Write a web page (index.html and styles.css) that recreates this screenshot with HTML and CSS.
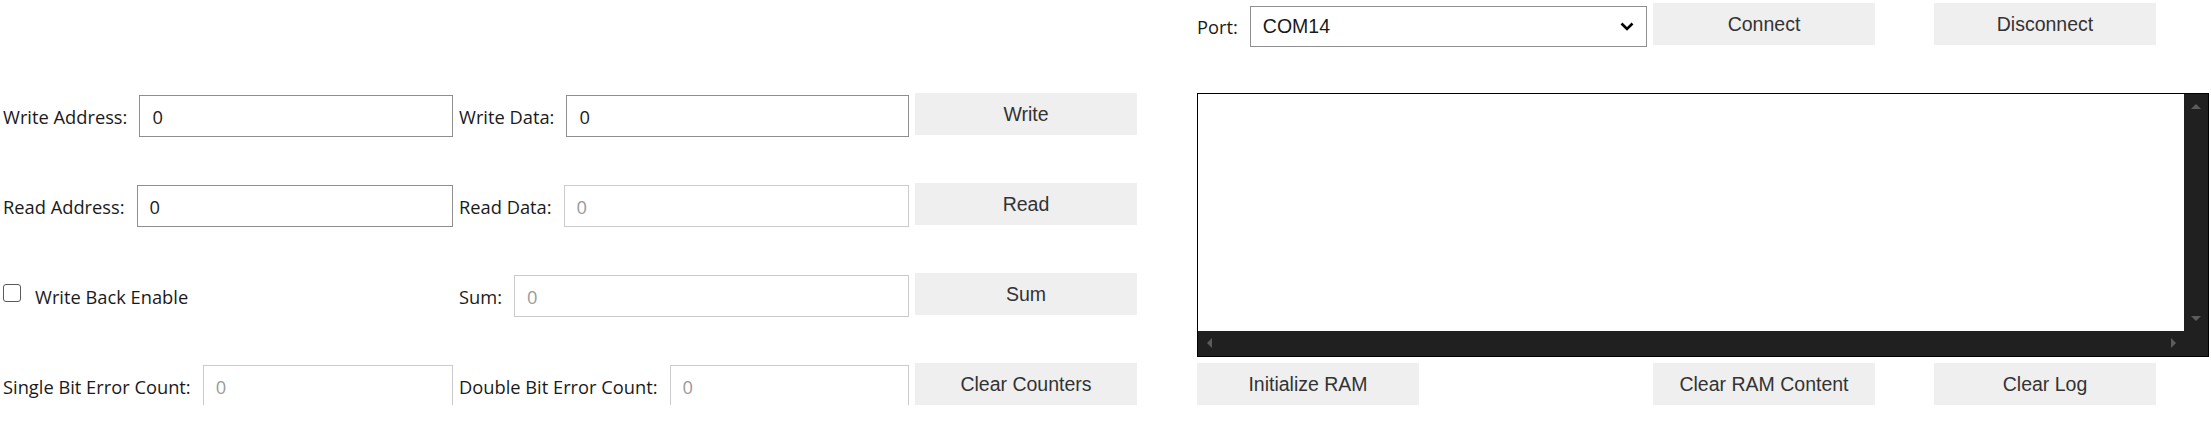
FILE: index.html
```html
<!DOCTYPE html>
<html lang="en">
<head>
<meta charset="utf-8">
<title>RAM ECC Control</title>
<link rel="stylesheet" href="styles.css">
</head>
<body>
<div class="app">
  <div class="topbar">
    <div class="cell port-cell">
      <label class="lbl" for="port">Port:</label>
      <div class="select-wrap">
        <select id="port" class="select"><option>COM14</option></select>
        <svg class="chev" width="14" height="9" viewBox="0 0 14 9"><path d="M1.5 1.5 L7 7 L12.5 1.5" fill="none" stroke="#000" stroke-width="2.6"/></svg>
      </div>
    </div>
    <button class="btn gap-s">Connect</button>
    <button class="btn gap-l">Disconnect</button>
  </div>

  <div class="left">
    <div class="row">
      <div class="cell"><label class="lbl">Write Address:</label><input class="inp" value="0"></div>
      <div class="cell"><label class="lbl">Write Data:</label><input class="inp" value="0"></div>
      <button class="btn">Write</button>
    </div>
    <div class="row">
      <div class="cell"><label class="lbl">Read Address:</label><input class="inp" value="0"></div>
      <div class="cell"><label class="lbl">Read Data:</label><input class="inp ro" value="0" disabled></div>
      <button class="btn">Read</button>
    </div>
    <div class="row">
      <div class="cell"><label class="chk-label"><input type="checkbox" class="chk"><span>Write Back Enable</span></label></div>
      <div class="cell"><label class="lbl">Sum:</label><input class="inp ro" value="0" disabled></div>
      <button class="btn">Sum</button>
    </div>
    <div class="row">
      <div class="cell"><label class="lbl">Single Bit Error Count:</label><input class="inp ro" value="0" disabled></div>
      <div class="cell"><label class="lbl">Double Bit Error Count:</label><input class="inp ro" value="0" disabled></div>
      <button class="btn">Clear Counters</button>
    </div>
  </div>

  <div class="right">
    <div class="log">
      <div class="log-text"></div>
      <div class="vbar"><span class="arr up"></span><span class="arr down"></span></div>
      <div class="hbar"><span class="arr left-a"></span><span class="arr right-a"></span></div>
      <div class="corner"></div>
    </div>
    <div class="bottombar">
      <div class="cell-w"><button class="btn">Initialize RAM</button></div>
      <button class="btn gap-s">Clear RAM Content</button>
      <button class="btn gap-l">Clear Log</button>
    </div>
  </div>
</div>
</body>
</html>
```
FILE: styles.css
```css
html, body {
  margin: 0;
  padding: 0;
  background: #ffffff;
}

.app {
  display: grid;
  grid-template-columns: 1134px 1012px;
  grid-template-rows: 93px auto;
  column-gap: 60px;
  padding-left: 3px;
  font-family: "Open Sans", "Noto Sans", sans-serif;
  color: #1a1a1a;
}

.topbar {
  grid-column: 2;
  grid-row: 1;
  display: flex;
  align-items: flex-start;
  padding-top: 3px;
}

.left {
  grid-column: 1;
  grid-row: 2;
  display: flex;
  flex-direction: column;
  gap: 48px;
}

.right {
  grid-column: 2;
  grid-row: 2;
  display: flex;
  flex-direction: column;
  gap: 6px;
}

.row {
  display: flex;
  align-items: flex-start;
  gap: 6px;
  height: 42px;
}

.cell {
  width: 450px;
  height: 42px;
  margin-top: 2px;
  display: flex;
  align-items: center;
  gap: 12px;
  flex: none;
}

.lbl {
  font-size: 18.3px;
  white-space: nowrap;
  color: #1a1a1a;
}

.inp {
  flex: 1;
  min-width: 0;
  height: 42px;
  box-sizing: border-box;
  border: 1px solid #8f8f8f;
  padding: 0 12px;
  font-family: "Open Sans", "Noto Sans", sans-serif;
  font-size: 18.3px;
  color: #1a1a1a;
  background: #fff;
  margin: 0;
  outline: none;
}

.inp.ro {
  border-color: #cbcbcb;
  color: #9a9a9a;
}

.btn {
  width: 222px;
  height: 42px;
  flex: none;
  border: 0;
  margin: 0;
  padding: 0;
  background: #efefef;
  color: #333;
  font-family: "Liberation Sans", Arial, sans-serif;
  font-size: 19.5px;
}

.gap-s { margin-left: 6px; }
.gap-l { margin-left: 59px; }

.chk-label {
  display: flex;
  align-items: center;
  gap: 14px;
  font-size: 18.3px;
  white-space: nowrap;
}

.chk {
  appearance: none;
  -webkit-appearance: none;
  width: 18px;
  height: 18px;
  margin: 0 0 7px 0;
  box-sizing: border-box;
  border: 1.5px solid #5a5a5a;
  border-radius: 3px;
  background: #fff;
}

.select-wrap {
  position: relative;
  flex: 1;
  height: 41px;
}

.select {
  appearance: none;
  -webkit-appearance: none;
  width: 100%;
  height: 41px;
  box-sizing: border-box;
  border: 1px solid #8f8f8f;
  border-radius: 0;
  background: #fff;
  padding: 0 12px;
  margin: 0;
  font-family: "Liberation Sans", Arial, sans-serif;
  font-size: 19.5px;
  color: #1a1a1a;
}

.chev {
  position: absolute;
  right: 13px;
  top: 16px;
}

.log {
  width: 1012px;
  height: 264px;
  box-sizing: border-box;
  border: 1px solid #000;
  display: grid;
  grid-template-columns: 1fr 24px;
  grid-template-rows: 1fr 25px;
  background: #202020;
}

.log-text {
  background: #fff;
}

.vbar, .hbar {
  position: relative;
  background: #202020;
}

.vbar { grid-column: 2; grid-row: 1; }
.hbar { grid-column: 1; grid-row: 2; }
.corner { grid-column: 2; grid-row: 2; background: #202020; }

.arr {
  position: absolute;
  width: 0;
  height: 0;
}

.arr.up {
  left: 7px;
  top: 10px;
  border-left: 5px solid transparent;
  border-right: 5px solid transparent;
  border-bottom: 5px solid #5c5c5c;
}

.arr.down {
  left: 7px;
  bottom: 10px;
  border-left: 5px solid transparent;
  border-right: 5px solid transparent;
  border-top: 5px solid #5c5c5c;
}

.arr.left-a {
  left: 9px;
  top: 7px;
  border-top: 5px solid transparent;
  border-bottom: 5px solid transparent;
  border-right: 5px solid #5c5c5c;
}

.arr.right-a {
  right: 8px;
  top: 7px;
  border-top: 5px solid transparent;
  border-bottom: 5px solid transparent;
  border-left: 5px solid #5c5c5c;
}

.bottombar {
  display: flex;
  align-items: flex-start;
}

.cell-w {
  width: 450px;
  flex: none;
}
```
